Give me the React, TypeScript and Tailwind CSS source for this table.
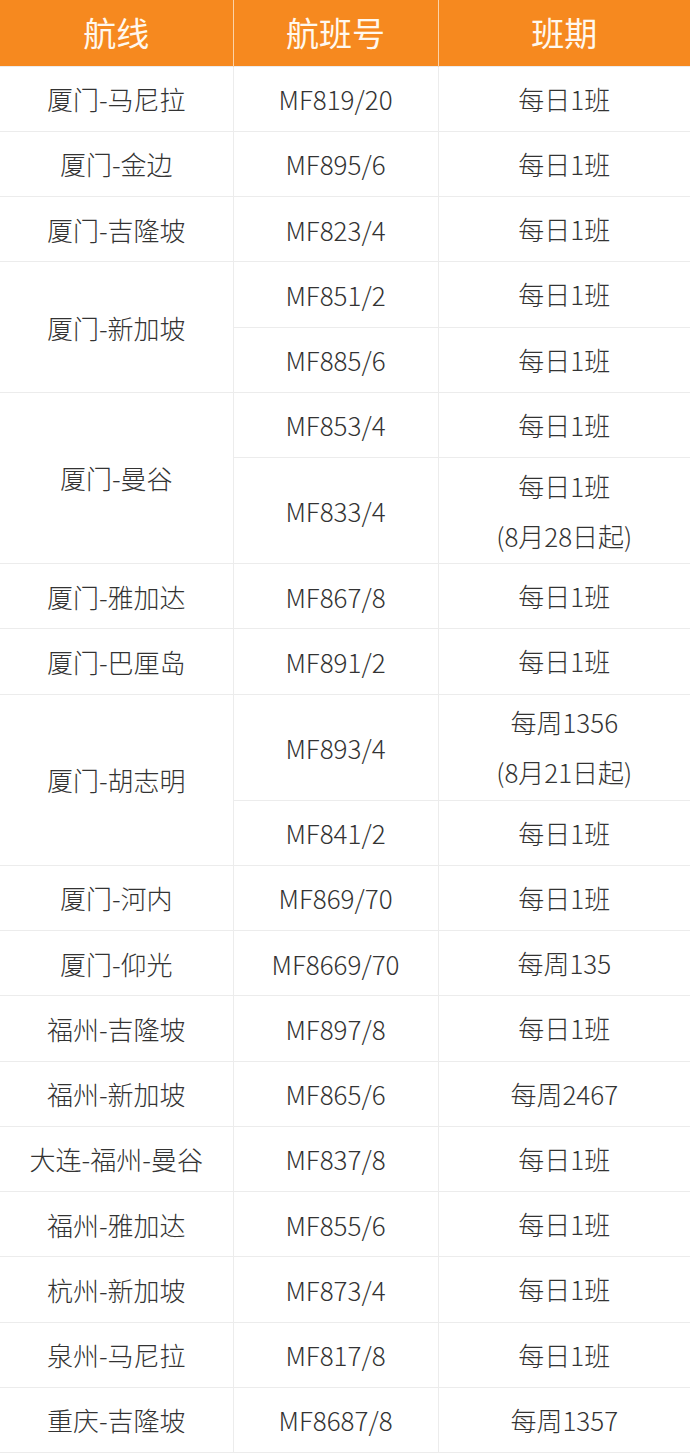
import React from 'react';

type Row = {
  route?: string;
  span?: number;
  flight: string;
  schedule: string[];
  tall?: boolean;
};

const rows: Row[] = [
  { route: '厦门-马尼拉', flight: 'MF819/20', schedule: ['每日1班'] },
  { route: '厦门-金边', flight: 'MF895/6', schedule: ['每日1班'] },
  { route: '厦门-吉隆坡', flight: 'MF823/4', schedule: ['每日1班'] },
  { route: '厦门-新加坡', span: 2, flight: 'MF851/2', schedule: ['每日1班'] },
  { flight: 'MF885/6', schedule: ['每日1班'] },
  { route: '厦门-曼谷', span: 2, flight: 'MF853/4', schedule: ['每日1班'] },
  { flight: 'MF833/4', schedule: ['每日1班', '(8月28日起)'], tall: true },
  { route: '厦门-雅加达', flight: 'MF867/8', schedule: ['每日1班'] },
  { route: '厦门-巴厘岛', flight: 'MF891/2', schedule: ['每日1班'] },
  { route: '厦门-胡志明', span: 2, flight: 'MF893/4', schedule: ['每周1356', '(8月21日起)'], tall: true },
  { flight: 'MF841/2', schedule: ['每日1班'] },
  { route: '厦门-河内', flight: 'MF869/70', schedule: ['每日1班'] },
  { route: '厦门-仰光', flight: 'MF8669/70', schedule: ['每周135'] },
  { route: '福州-吉隆坡', flight: 'MF897/8', schedule: ['每日1班'] },
  { route: '福州-新加坡', flight: 'MF865/6', schedule: ['每周2467'] },
  { route: '大连-福州-曼谷', flight: 'MF837/8', schedule: ['每日1班'] },
  { route: '福州-雅加达', flight: 'MF855/6', schedule: ['每日1班'] },
  { route: '杭州-新加坡', flight: 'MF873/4', schedule: ['每日1班'] },
  { route: '泉州-马尼拉', flight: 'MF817/8', schedule: ['每日1班'] },
  { route: '重庆-吉隆坡', flight: 'MF8687/8', schedule: ['每周1357'] },
];

export default function App() {
  return (
    <div
      className="w-[690px] bg-white"
      style={{ fontFamily: '"Noto Sans CJK SC", "Noto Sans", sans-serif' }}
    >
      <table className="w-[690px] table-fixed border-collapse text-center">
        <colgroup>
          <col className="w-[233px]" />
          <col className="w-[205px]" />
          <col className="w-[252px]" />
        </colgroup>
        <thead>
          <tr className="bg-[#f6891f] text-[33px] text-[#fff8ee]">
            <th className="h-[66px] border-r border-[#fbd3a8] font-normal">航线</th>
            <th className="h-[66px] border-r border-[#fbd3a8] font-normal">航班号</th>
            <th className="h-[66px] font-normal">班期</th>
          </tr>
        </thead>
        <tbody className="text-[26px] font-light text-[#333]">
          {rows.map((r, i) => (
            <tr key={i}>
              {r.route && (
                <td
                  rowSpan={r.span ?? 1}
                  className="border border-[#ececec] border-l-0 whitespace-nowrap"
                >
                  {r.route}
                </td>
              )}
              <td
                className={`border border-[#ececec] ${r.tall ? 'h-[106px]' : 'h-[65.25px]'}`}
              >
                {r.flight}
              </td>
              <td className="border border-[#ececec] border-r-0 leading-[50px]">
                {r.schedule.map((s, j) => (
                  <div key={j}>{s}</div>
                ))}
              </td>
            </tr>
          ))}
        </tbody>
      </table>
    </div>
  );
}
